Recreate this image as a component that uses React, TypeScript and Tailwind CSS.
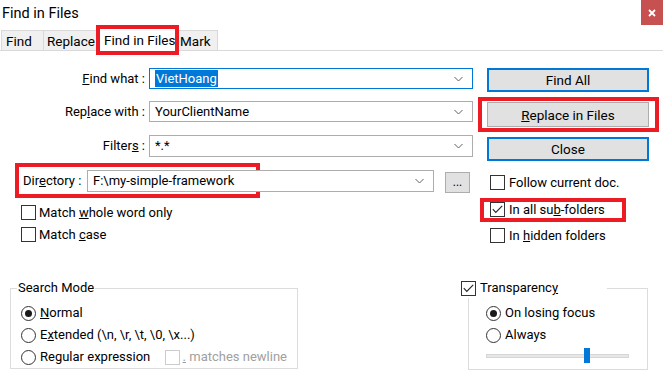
import React from "react";

const Chevron = () => (
  <svg width="9" height="5" viewBox="0 0 9 5" className="absolute right-[9px] top-1/2 -translate-y-1/2">
    <path d="M0.5 0.5 L4.5 4.5 L8.5 0.5" fill="none" stroke="#606060" strokeWidth="1" />
  </svg>
);

const Combo = ({ children, focused, className }: { children?: React.ReactNode; focused?: boolean; className?: string }) => (
  <div
    className={`relative flex items-center bg-white pl-[5px] ${
      focused ? "border border-[#0078d7]" : "border border-[#adadad]"
    } ${className ?? ""}`}
  >
    {children}
    <Chevron />
  </div>
);

const Check = ({ checked, disabled }: { checked?: boolean; disabled?: boolean }) => (
  <div
    className={`flex h-[15px] w-[15px] shrink-0 items-center justify-center border bg-white ${
      disabled ? "border-[#cccccc]" : "border-[#333333]"
    }`}
  >
    {checked && (
      <svg width="11" height="9" viewBox="0 0 11 9">
        <path d="M0.8 4.2 L3.8 7.4 L10.2 0.8" fill="none" stroke="#222" strokeWidth="1.1" />
      </svg>
    )}
  </div>
);

const Radio = ({ checked }: { checked?: boolean }) => (
  <div className="flex h-[15px] w-[15px] shrink-0 items-center justify-center rounded-full border border-[#333333] bg-white">
    {checked && <div className="h-[7px] w-[7px] rounded-full bg-[#1a1a1a]" />}
  </div>
);

const Btn = ({ children, focused, className }: { children: React.ReactNode; focused?: boolean; className?: string }) => (
  <div
    className={`flex items-center justify-center bg-[#e1e1e1] ${
      focused ? "border-2 border-[#0078d7]" : "border border-[#adadad]"
    } ${className ?? ""}`}
  >
    {children}
  </div>
);

const RedBox = ({ className }: { className: string }) => (
  <div className={`pointer-events-none absolute border-[4px] border-[#ed1c24] ${className}`} />
);

export default function App() {
  return (
    <div
      className="relative h-[381px] w-[663px] overflow-hidden whitespace-nowrap bg-white text-[13px] leading-[20px] text-black"
      style={{ fontFamily: 'Roboto, "Noto Sans", sans-serif' }}
    >
      {/* title bar */}
      <div className="flex h-[25px] items-start justify-between">
        <span className="pl-[2px] pt-[4px] text-[14.5px]">Find in Files</span>
        <div className="flex h-[25px] w-[22px] items-center justify-center bg-[#c75050]">
          <svg width="8" height="8" viewBox="0 0 8 8">
            <path d="M1 1 L7 7 M7 1 L1 7" stroke="white" strokeWidth="1.8" />
          </svg>
        </div>
      </div>

      {/* tabs */}
      <div className="flex h-[26px] items-end border-b border-[#d9d9d9] pl-[1px] text-[13.5px]">
        <div className="mb-[-1px] flex h-[21px] w-[43px] items-center border border-[#d9d9d9] bg-[#f0f0f0] pl-[4px]">Find</div>
        <div className="mb-[-1px] flex h-[21px] w-[54px] items-center border border-l-0 border-[#d9d9d9] bg-[#f0f0f0] pl-[3px]">Replace</div>
        <div className="relative z-10 mb-[-1px] flex h-[24px] w-[80px] items-center border border-b-0 border-[#d9d9d9] bg-white pl-[5px]">
          Find in Files
          <RedBox className="-left-[3px] -top-[3px] h-[30px] w-[83px]" />
        </div>
        <div className="mb-[-1px] flex h-[21px] w-[40px] items-center border border-l-0 border-[#d9d9d9] bg-[#f0f0f0] pl-[2px]">Mark</div>
      </div>

      {/* main form */}
      <div className="flex pt-[17px]">
        <div className="w-[487px]">
          <div className="flex h-[21px] items-center">
            <span className="w-[145px] text-right">
              <u>F</u>ind what :
            </span>
            <Combo focused className="ml-[4px] h-[21px] w-[324px]">
              <span className="bg-[#0078d7] px-[1px] leading-[17px] text-white">VietHoang</span>
            </Combo>
          </div>
          <div className="mt-[12px] flex h-[21px] items-center">
            <span className="w-[145px] text-right">
              Rep<u>l</u>ace with :
            </span>
            <Combo className="ml-[4px] h-[21px] w-[324px]">YourClientName</Combo>
          </div>
          <div className="mt-[13px] flex h-[22px] items-center">
            <span className="w-[145px] text-right">
              Filter<u>s</u> :
            </span>
            <Combo className="ml-[4px] h-[22px] w-[324px]">*.*</Combo>
          </div>
          <div className="relative mt-[13px] flex h-[22px] items-center pl-[23px]">
            <RedBox className="left-[15px] -top-[7px] h-[35px] w-[245px]" />
            <span className="w-[64px]">
              Dir<u>e</u>ctory :
            </span>
            <Combo className="h-[22px] w-[347px]">F:\my-simple-framework</Combo>
            <Btn className="ml-[11px] mt-[2px] h-[21px] w-[25px] text-[12px]">...</Btn>
          </div>
          <div className="ml-[21px] mt-[13px] flex h-[15px] items-center gap-[3px]">
            <Check />
            <span>
              Match <u>w</u>hole word only
            </span>
          </div>
          <div className="ml-[21px] mt-[7px] flex h-[15px] items-center gap-[3px]">
            <Check />
            <span>
              Match <u>c</u>ase
            </span>
          </div>
        </div>

        <div className="w-[162px] text-[13.5px]">
          <Btn focused className="h-[24px]">Find All</Btn>
          <div className="relative mt-[10px]">
            <RedBox className="-left-[9px] -top-[5px] h-[35px] w-[181px]" />
            <Btn className="h-[25px]">
              <span>
                <u>R</u>eplace in Files
              </span>
            </Btn>
          </div>
          <Btn focused className="mt-[10px] h-[24px]">Close</Btn>
          <div className="ml-[3px] mt-[14px] flex h-[15px] items-center gap-[4px] text-[13px]">
            <Check />
            <span>Follow current doc.</span>
          </div>
          <div className="relative ml-[3px] mt-[12px] flex h-[15px] items-center gap-[4px] text-[13px]">
            <RedBox className="-left-[10px] -top-[4px] h-[24px] w-[146px]" />
            <Check checked />
            <span>
              In all su<u>b</u>-folders
            </span>
          </div>
          <div className="ml-[3px] mt-[11px] flex h-[15px] items-center gap-[4px] text-[13px]">
            <Check />
            <span>
              In <u>h</u>idden folders
            </span>
          </div>
        </div>
      </div>

      {/* bottom groups */}
      <div className="mt-[35px] flex">
        <fieldset className="ml-[10px] h-[91px] w-[288px] min-w-0 shrink-0 border border-[#dcdcdc] px-[10px]">
          <legend className="ml-[-4px] px-[1px]">Search Mode</legend>
          <div className="mt-[4px] flex h-[22px] items-center gap-[4px]">
            <Radio checked />
            <span>
              <u>N</u>ormal
            </span>
          </div>
          <div className="flex h-[22px] items-center gap-[4px]">
            <Radio />
            <span>
              E<u>x</u>tended (\n, \r, \t, \0, \x...)
            </span>
          </div>
          <div className="flex h-[22px] items-center gap-[4px]">
            <Radio />
            <span className="w-[127px]">Regular expression</span>
            <div className="flex items-center gap-[3px] text-[#a0a0a0]">
              <Check disabled />
              <span>
                <u>.</u> matches newline
              </span>
            </div>
          </div>
        </fieldset>

        <fieldset className="ml-[170px] h-[92px] w-[180px] min-w-0 shrink-0 border border-[#dcdcdc] px-[17px]">
          <legend className="ml-[-25px] flex w-[146px] items-center gap-[4px] bg-white">
            <Check checked />
            <span>
              Transparenc<u>y</u>
            </span>
          </legend>
          <div className="mt-[4px] flex h-[22px] items-center gap-[4px]">
            <Radio checked />
            <span>On losing focus</span>
          </div>
          <div className="flex h-[22px] items-center gap-[4px]">
            <Radio />
            <span>Always</span>
          </div>
          <div className="relative mt-[8px] h-[4px] w-[143px] border border-[#d6d6d6] bg-[#e7e7e7]">
            <div className="absolute left-[97px] top-[-7px] h-[15px] w-[6px] bg-[#0078d7]" />
          </div>
        </fieldset>
      </div>
    </div>
  );
}
